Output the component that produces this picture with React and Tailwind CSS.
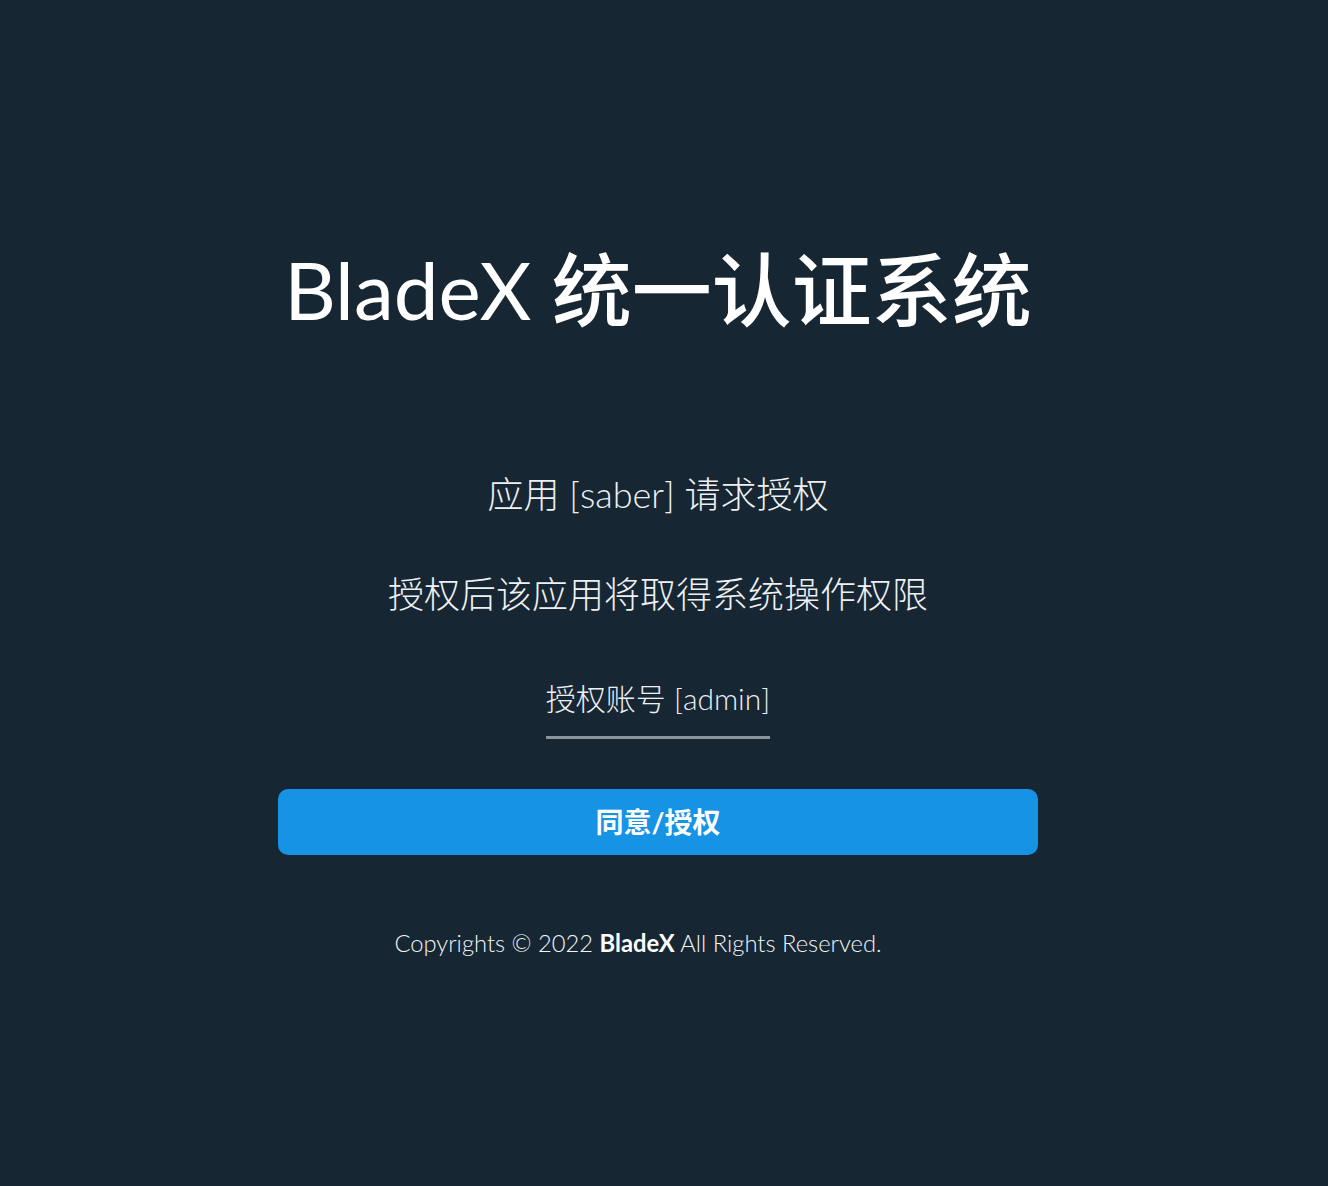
export default function App() {
  return (
    <div
      className="min-h-screen w-full bg-[#162633] flex flex-col items-center pt-[241px] pr-[12px] text-white"
      style={{ fontFamily: "Lato, 'Noto Sans CJK SC', sans-serif" }}
    >
      {/* 标题 */}
      <h1 className="text-[80px] leading-[96px] font-normal">
        BladeX <span className="font-medium">统一认证系统</span>
      </h1>

      <p className="mt-[133px] text-[36px] leading-[48px] font-light text-[#eef0f2]">
        应用 [saber] 请求授权
      </p>
      <p className="mt-[52px] text-[36px] leading-[48px] font-light text-[#eef0f2]">
        授权后该应用将取得系统操作权限
      </p>

      {/* 授权账号 */}
      <div className="mt-[62px] pb-[20px] border-b-[3px] border-[#8b949b] text-[30px] leading-[36px] font-light text-[#eef0f2]">
        授权账号 [admin]
      </div>

      <button className="mt-[50px] w-[760px] h-[66px] rounded-[10px] bg-[#1793e6] text-white text-[28px] font-bold">
        同意/授权
      </button>

      <p className="mt-[74px] mr-[40px] text-[23.75px] leading-[28px] font-light text-[#f2f4f6]">
        Copyrights © 2022 <span className="font-bold text-white">BladeX</span> All Rights Reserved.
      </p>
    </div>
  );
}
